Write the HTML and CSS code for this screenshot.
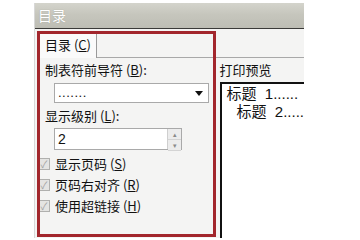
FILE: index.html
```html
<!DOCTYPE html>
<html lang="zh-CN">
<head>
    <meta charset="UTF-8">
    <title>目录</title>
    <link rel="stylesheet" href="styles.css">
</head>
<body>

<div class="window">
    <div class="titlebar">目录</div>
    <div class="dialog">
        <div class="tabstrip">
            <div class="tab">目录 (<u>C</u>)</div>
            <div class="tab-rest"></div>
        </div>
        <div class="panel">
            <div class="options">
                <div class="label">制表符前导符 (<u>B</u>):</div>
                <div class="select">
                    <span class="value">.......</span>
                    <span class="arrow"></span>
                </div>
                <div class="label">显示级别 (<u>L</u>):</div>
                <div class="spin">
                    <span class="value">2</span>
                    <span class="spin-buttons">
                        <span class="spin-btn">&#9652;</span>
                        <span class="spin-btn">&#9662;</span>
                    </span>
                </div>
                <div class="checks">
                    <div class="check"><span class="box">&#10003;</span>显示页码 (<u>S</u>)</div>
                    <div class="check"><span class="box">&#10003;</span>页码右对齐 (<u>R</u>)</div>
                    <div class="check"><span class="box">&#10003;</span>使用超链接 (<u>H</u>)</div>
                </div>
            </div>
            <div class="preview">
                <div class="label">打印预览</div>
                <div class="preview-box">
                    <div class="toc-line">标题 &nbsp;1......</div>
                    <div class="toc-line sub">标题 &nbsp;2.....</div>
                </div>
            </div>
        </div>
    </div>
    <!-- red annotation frame -->
    <div class="highlight"></div>
</div>

</body>
</html>
```

FILE: styles.css
```css
body {
    margin: 0;
    background-color: #fff;
    font-family: "Noto Sans CJK SC", "Liberation Sans", sans-serif;
    font-size: 13px;
    color: #111;
}

.window {
    position: relative;
    margin: 3px 0 0 34px;
    width: 269px;
    height: 235px;
    background-color: #f4f4f3;
    border-left: 1px solid #d8d8d8;
    overflow: hidden;
}

.titlebar {
    height: 25px;
    line-height: 24px;
    padding-left: 3px;
    color: #fff;
    font-size: 14px;
    background: linear-gradient(#d4d4cc, #c6c6bd 45%, #bdbdb4);
    border-bottom: 1px solid #3a3a38;
    text-shadow: 0 0 1px #9a9a92;
}

.dialog {
    padding-top: 2px;
}

.tabstrip {
    display: flex;
    height: 27px;
}

.tab {
    width: 51px;
    margin-left: 5px;
    padding-left: 5px;
    line-height: 28px;
    background-color: #fafafa;
    border-right: 1px solid #9a9a9a;
}

.tab-rest {
    flex: 1;
    border-bottom: 1px solid #a8a8a8;
}

.panel {
    display: flex;
}

.options {
    width: 170px;
    padding: 3px 0 0 10px;
}

.label {
    height: 18px;
    line-height: 18px;
}

.select {
    display: flex;
    align-items: center;
    justify-content: space-between;
    width: 150px;
    height: 18px;
    margin: 4px 0 4px 9px;
    padding-left: 3px;
    background-color: #fff;
    border: 1px solid #a9a9a9;
}

.select .value {
    font-family: "Liberation Sans", sans-serif;
    letter-spacing: 0.5px;
    line-height: 10px;
}

.arrow {
    width: 0;
    height: 0;
    margin-right: 5px;
    border-left: 4px solid transparent;
    border-right: 4px solid transparent;
    border-top: 5px solid #111;
}

.spin {
    display: flex;
    justify-content: space-between;
    width: 123px;
    height: 20px;
    margin: 3px 0 0 9px;
    padding-left: 3px;
    background-color: #fff;
    border: 1px solid #a9a9a9;
}

.spin .value {
    font-family: "Liberation Sans", sans-serif;
    font-size: 14px;
    line-height: 20px;
}

.spin-buttons {
    display: flex;
    flex-direction: column;
    width: 13px;
    border-left: 1px solid #cfcfcf;
}

.spin-btn {
    flex: 1;
    font-size: 7px;
    line-height: 10px;
    text-align: center;
    color: #8a8a8a;
    background-color: #ececec;
    border-bottom: 1px solid #d4d4d4;
}

.checks {
    padding-top: 3px;
}

.check {
    display: flex;
    align-items: center;
    height: 21px;
    margin-left: -7px;
}

.box {
    display: inline-block;
    width: 10px;
    height: 10px;
    margin-right: 5px;
    font-size: 10px;
    line-height: 10px;
    text-align: center;
    color: #a0a0a0;
    background-color: #e4e4e2;
    border: 1px solid #b0b0ae;
}

.preview {
    flex: 1;
    padding: 3px 0 0 7px;
}

.preview-box {
    height: 160px;
    margin-top: 3px;
    margin-left: 1px;
    padding: 1px 0 0 4px;
    background-color: #fff;
    border-top: 2px solid #111;
    border-left: 2px solid #111;
    white-space: nowrap;
    overflow: hidden;
}

.toc-line {
    font-family: "Liberation Sans", "Noto Sans CJK SC", sans-serif;
    font-size: 15px;
    line-height: 18px;
}

.toc-line.sub {
    padding-left: 10px;
}

.highlight {
    position: absolute;
    left: 2px;
    top: 28px;
    width: 173px;
    height: 200px;
    border: 3px solid #a2262c;
}
```
